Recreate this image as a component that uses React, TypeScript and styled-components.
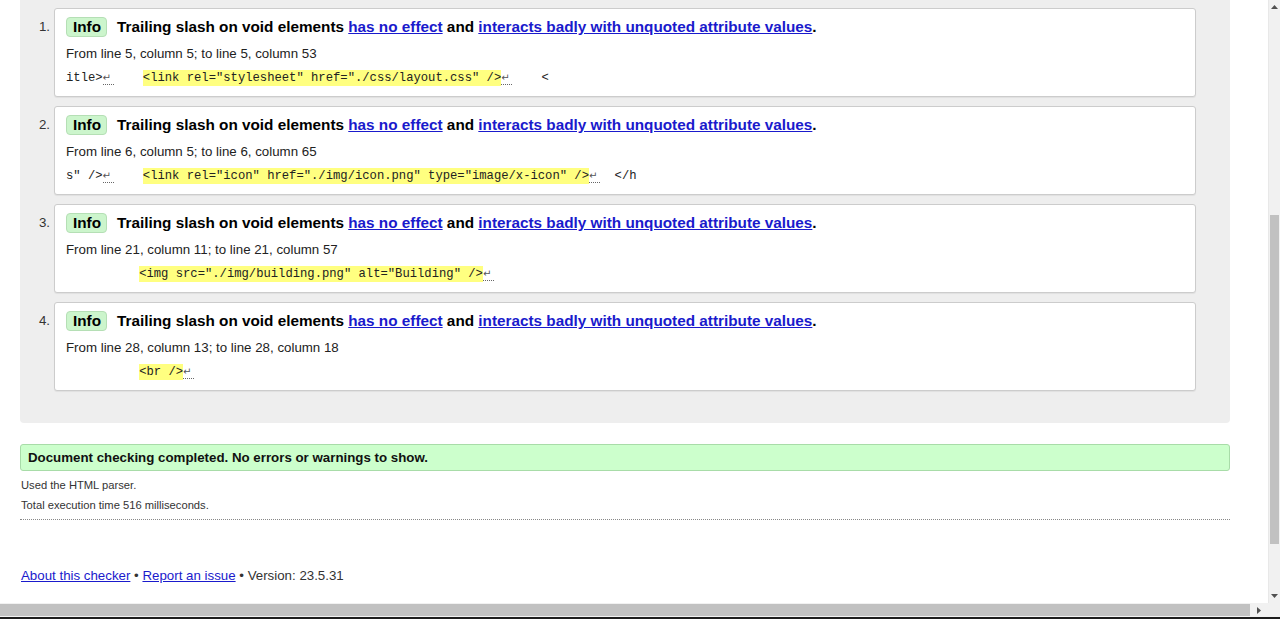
import { FC, Fragment } from "react";
import styled, { createGlobalStyle } from "styled-components";

const GlobalStyle = createGlobalStyle`
  html, body {
    margin: 0;
    padding: 0;
    background: #ffffff;
  }
  body {
    font-family: "Liberation Sans", Arial, sans-serif;
    color: #000;
  }
`;

type Message = {
  from: string;
  code: (string | { mark: string } | { nl: true })[];
};

const messages: Message[] = [
  {
    from: "From line 5, column 5; to line 5, column 53",
    code: [
      "itle>",
      { nl: true },
      "    ",
      { mark: '<link rel="stylesheet" href="./css/layout.css" />' },
      { nl: true },
      "    <",
    ],
  },
  {
    from: "From line 6, column 5; to line 6, column 65",
    code: [
      's" />',
      { nl: true },
      "    ",
      { mark: '<link rel="icon" href="./img/icon.png" type="image/x-icon" />' },
      { nl: true },
      "  </h",
    ],
  },
  {
    from: "From line 21, column 11; to line 21, column 57",
    code: [
      "          ",
      { mark: '<img src="./img/building.png" alt="Building" />' },
      { nl: true },
    ],
  },
  {
    from: "From line 28, column 13; to line 28, column 18",
    code: ["          ", { mark: "<br />" }, { nl: true }],
  },
];

const App: FC = (): JSX.Element => {
  return (
    <>
      <GlobalStyle />
      <Frame>
        <Viewport>
          <ResultsPanel>
            {messages.map((msg, index) => (
              <ItemRow key={index}>
                <ItemNumber>{index + 1}.</ItemNumber>
                <Card>
                  <TitleLine>
                    <Badge>Info</Badge>
                    <Title>
                      Trailing slash on void elements{" "}
                      <TitleLink href="#">has no effect</TitleLink> and{" "}
                      <TitleLink href="#">
                        interacts badly with unquoted attribute values
                      </TitleLink>
                      .
                    </Title>
                  </TitleLine>
                  <Location>{msg.from}</Location>
                  <Extract>
                    {msg.code.map((part, i) => {
                      if (typeof part === "string") {
                        return <Fragment key={i}>{part}</Fragment>;
                      }
                      if ("mark" in part) {
                        return <Mark key={i}>{part.mark}</Mark>;
                      }
                      return <NewLine key={i}>↵</NewLine>;
                    })}
                  </Extract>
                </Card>
              </ItemRow>
            ))}
          </ResultsPanel>

          <SuccessBox>
            Document checking completed. No errors or warnings to show.
          </SuccessBox>

          <Meta>
            <MetaLine>Used the HTML parser.</MetaLine>
            <MetaLine>Total execution time 516 milliseconds.</MetaLine>
          </Meta>

          <Footer>
            <FooterLink href="#">About this checker</FooterLink> •{" "}
            <FooterLink href="#">Report an issue</FooterLink> • Version: 23.5.31
          </Footer>
        </Viewport>

        <VScroll>
          <ArrowBox>
            <svg width="7" height="4" viewBox="0 0 7 4">
              <path d="M0 4 L3.5 0 L7 4 Z" fill="#505050" />
            </svg>
          </ArrowBox>
          <VTrack>
            <VThumb />
          </VTrack>
          <ArrowBox>
            <svg width="7" height="4" viewBox="0 0 7 4">
              <path d="M0 0 L7 0 L3.5 4 Z" fill="#505050" />
            </svg>
          </ArrowBox>
        </VScroll>

        <HScroll>
          <HThumb />
          <HArrow>
            <svg width="4" height="7" viewBox="0 0 4 7">
              <path d="M0 0 L4 3.5 L0 7 Z" fill="#505050" />
            </svg>
          </HArrow>
        </HScroll>
        <Corner />
        <Taskbar />
      </Frame>
    </>
  );
};

export default App;

const Frame = styled.div`
  width: 1280px;
  height: 619px;
  display: grid;
  grid-template-columns: 1268px 12px;
  grid-template-rows: 603px 14px 2px;
  overflow: hidden;
`;

const Viewport = styled.div`
  overflow: hidden;
  padding: 0 38px 0 20px;
  background: #ffffff;
`;

const ResultsPanel = styled.div`
  background: #eeeeee;
  border-radius: 0 0 4px 4px;
  padding: 8px 34px 32px 0;
  display: flex;
  flex-direction: column;
  gap: 9px;
`;

const ItemRow = styled.div`
  display: flex;
  align-items: flex-start;
`;

const ItemNumber = styled.div`
  width: 34px;
  box-sizing: border-box;
  padding: 10px 4px 0 0;
  text-align: right;
  font-size: 13.3px;
  line-height: 17px;
  color: #333;
`;

const Card = styled.div`
  flex: 1;
  background: #ffffff;
  border: 1px solid #cccccc;
  border-radius: 3px;
  box-shadow: 0 1px 1px rgba(0, 0, 0, 0.06);
  padding: 8px 11px 9px;
  display: flex;
  flex-direction: column;
  gap: 8px;
`;

const TitleLine = styled.div`
  display: flex;
  align-items: center;
  gap: 10px;
  height: 20px;
`;

const Badge = styled.span`
  box-sizing: border-box;
  height: 20px;
  line-height: 18px;
  padding: 0 5px 0 6px;
  border: 1px solid #b5dfb5;
  border-radius: 4px;
  background: #ccf5cc;
  font-weight: bold;
  font-size: 15.3px;
  color: #000;
`;

const Title = styled.span`
  font-weight: bold;
  font-size: 15.3px;
  line-height: 20px;
  color: #000;
  white-space: nowrap;
`;

const TitleLink = styled.a`
  color: #1a1acc;
  text-decoration: underline;
`;

const Location = styled.div`
  font-size: 13.3px;
  line-height: 17px;
  color: #222;
`;

const Extract = styled.div`
  font-family: "Liberation Mono", "DejaVu Sans Mono", monospace;
  font-size: 12.2px;
  line-height: 17px;
  height: 17px;
  white-space: pre;
  color: #222;
`;

const Mark = styled.b`
  font-weight: normal;
  background: #ffff80;
  color: #222;
  padding: 1px 0;
`;

const NewLine = styled.span`
  display: inline-block;
  width: 11px;
  font-family: "DejaVu Sans", sans-serif;
  font-size: 10px;
  line-height: 12px;
  color: #555;
  border-bottom: 1px dotted #666;
`;

const SuccessBox = styled.div`
  margin-top: 21px;
  box-sizing: border-box;
  height: 27px;
  line-height: 25px;
  padding: 0 7px;
  background: #ccffcc;
  border: 1px solid #a8dca8;
  border-radius: 3px;
  font-weight: bold;
  font-size: 13.3px;
  color: #111;
`;

const Meta = styled.div`
  margin-top: 6px;
  padding: 0 0 6px 1px;
  border-bottom: 1px dotted #888;
  display: flex;
  flex-direction: column;
  gap: 4px;
`;

const MetaLine = styled.div`
  font-size: 11.2px;
  line-height: 16px;
  color: #333;
`;

const Footer = styled.div`
  margin-top: 48px;
  padding-left: 1px;
  font-size: 13.3px;
  line-height: 16px;
  color: #333;
`;

const FooterLink = styled.a`
  color: #1a1acc;
  text-decoration: underline;
`;

const VScroll = styled.div`
  background: #f1f1f1;
  border-left: 1px solid #e8e8e8;
  display: flex;
  flex-direction: column;
`;

const ArrowBox = styled.div`
  height: 14px;
  display: flex;
  align-items: center;
  justify-content: center;
`;

const VTrack = styled.div`
  flex: 1;
  padding: 201px 1px 45px 1px;
  display: flex;
`;

const VThumb = styled.div`
  flex: 1;
  background: #c1c1c1;
`;

const HScroll = styled.div`
  background: #f1f1f1;
  display: flex;
  align-items: stretch;
  padding: 1px 0;
`;

const HThumb = styled.div`
  width: 1250px;
  background: #c1c1c1;
`;

const HArrow = styled.div`
  flex: 1;
  display: flex;
  align-items: center;
  justify-content: center;
`;

const Corner = styled.div`
  background: #f1f1f1;
`;

const Taskbar = styled.div`
  grid-column: 1 / span 2;
  background: #1c1c1c;
`;
